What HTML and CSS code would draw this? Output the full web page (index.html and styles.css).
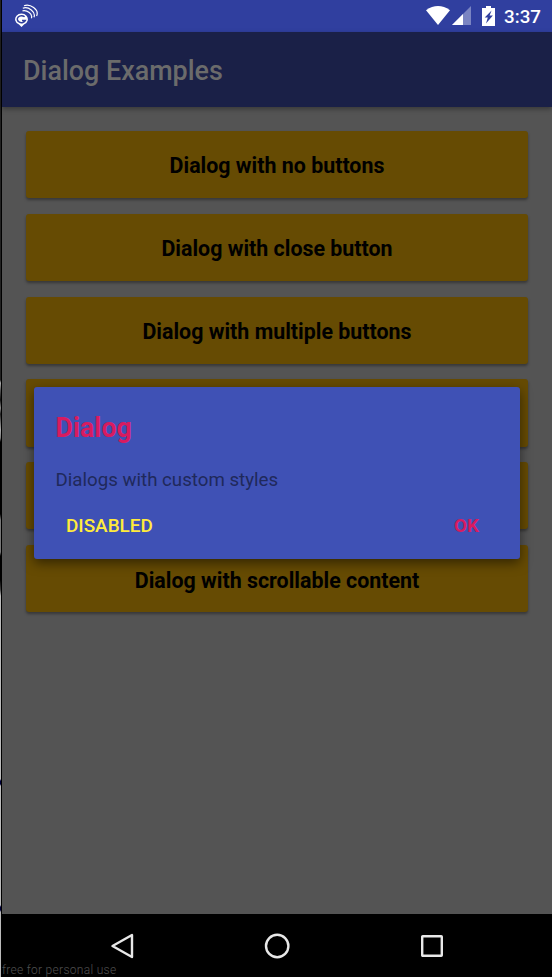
FILE: index.html
```html
<!DOCTYPE html>
<html lang="en">
<head>
<meta charset="utf-8">
<title>Dialog Examples</title>
<link rel="stylesheet" href="styles.css">
</head>
<body>
<div class="device">
  <header class="status">
    <svg class="notice" width="26" height="24" viewBox="0 0 26 24" fill="none" stroke="#fff">
      <path d="M8.5 23 6 20.6A6.4 5.8 0 1 1 11 20.6Z" fill="#fff" stroke="none"/>
      <path d="M11.6 12.8A4.2 3.5 0 1 0 12.4 16.4H9" stroke="#303f9f" stroke-width="1.5"/>
      <path d="M9.5 6.8C14 5.7 20 10 18.4 14.2M9.8 4.2C15.5 2.2 23 8 21 13.2M11 1.8C17-.6 26.5 5.5 23.6 12" stroke-width="1.2"/>
    </svg>
    <div class="indicators">
      <svg class="wifi" width="24" height="19" viewBox="0 0 24 19"><path d="M0 4.2Q12-4 24 4.2L12 19Z" fill="#fff"/></svg>
      <svg class="signal" width="19" height="19" viewBox="0 0 19 19"><path d="M0 19 19 0V19Z" fill="#7a84c2"/><path d="M0 19 11 8V19Z" fill="#fff"/></svg>
      <svg class="battery" width="13" height="20" viewBox="0 0 13 20"><path d="M4 0h5v2h4v18H0V2h4Z" fill="#fff"/><path d="M9.6 4.5 2.7 11.4H5.8L4 17.5 10.9 9.6H7.6Z" fill="#303f9f"/></svg>
      <span class="clock">3:37</span>
    </div>
  </header>
  <div class="appbar"><h1>Dialog Examples</h1></div>
  <main class="list">
    <button class="item">Dialog with no buttons</button>
    <button class="item">Dialog with close button</button>
    <button class="item">Dialog with multiple buttons</button>
    <button class="item"></button>
    <button class="item"></button>
    <button class="item">Dialog with scrollable content</button>
  </main>
  <nav class="navbar">
    <svg width="24" height="26" viewBox="0 0 24 26"><path d="M2.5 13 22 2V24Z"/></svg>
    <svg width="26" height="26" viewBox="0 0 26 26"><circle cx="13.2" cy="13" r="11.2"/></svg>
    <svg width="24" height="24" viewBox="0 0 24 24"><rect x="2.2" y="2.2" width="19.6" height="19.6" rx=".5"/></svg>
    <span class="watermark">free for personal use</span>
  </nav>
  <section class="dialog" role="dialog">
    <h2>Dialog</h2>
    <p>Dialogs with custom styles</p>
    <div class="actions"><span class="disabled">DISABLED</span><span class="ok">OK</span></div>
  </section>
</div>
</body>
</html>
```
FILE: styles.css
```css
* { box-sizing: border-box; }
body {
  margin: 0;
  height: 977px;
  padding-left: 2px;
  overflow: hidden;
  font-family: Roboto, sans-serif;
  background:
    linear-gradient(#000, #000) 1px 0 / 1px 977px no-repeat,
    linear-gradient(#222 0 380px, #aaa 383px, #555 390px, #111 400px, #888 408px, #222 414px, #aaa 430px, #777 438px, #000 442px 514px, #777 520px 552px, #000 556px 580px, #444 590px, #bbb 596px 779px, #00003a 781px 784px, #bbb 786px 905px, #00003a 907px 910px, #bbb 912px 977px) 0 0 / 1px 977px no-repeat #000;
}
.device {
  position: relative;
  height: 977px;
  display: flex;
  flex-direction: column;
  background: #545454;
}
.status {
  height: 32px;
  display: flex;
  justify-content: space-between;
  background: #303f9f;
}
.notice { margin: 4px 0 0 11px; }
.indicators { display: flex; padding: 6px 11px 0 0; }
.signal { margin-left: 2px; }
.battery { margin-left: 11px; }
.clock { margin-left: 9px; font-size: 18.8px; line-height: 22px; font-weight: 500; color: #fff; }
.appbar {
  height: 75px;
  padding: 3px 0 0 21px;
  display: flex;
  align-items: center;
  background: #1a2047;
  box-shadow: 0 2px 5px rgba(0,0,0,.35);
}
h1 { margin: 0; font-size: 26.9px; font-weight: 500; color: #6b6b6b; }
.list {
  flex: 1;
  display: flex;
  flex-direction: column;
  gap: 15.8px;
  padding: 23.8px 24px 0;
}
.item {
  height: 67.1px;
  padding: 3.6px 0 0;
  border: 0;
  border-radius: 3px;
  background: #664b03;
  box-shadow: 0 2px 3px rgba(0,0,0,.35);
  font: 700 21.4px/26px Roboto, sans-serif;
  color: #000;
}
.navbar {
  position: relative;
  height: 63px;
  display: flex;
  justify-content: space-between;
  align-items: center;
  padding: 1px 108px 0 108px;
  background: #000;
}
.navbar svg { fill: none; stroke: #e8e8e8; stroke-width: 2.4; stroke-linejoin: round; }
.watermark { position: absolute; left: 0; bottom: -1px; font-size: 12px; line-height: 15px; font-weight: 300; letter-spacing: .3px; color: #505050; }
.dialog {
  position: absolute;
  left: 32px;
  top: 387.4px;
  width: 486px;
  height: 171.6px;
  padding: 25px 22px 0;
  border-radius: 3px;
  background: #3f51b5;
  box-shadow: 0 4px 12px rgba(0,0,0,.5);
}
h2 { margin: 0 0 0 -0.5px; font-size: 26.8px; line-height: 32px; font-weight: 700; color: #d81b60; }
p { margin: 24px 0 0 -0.5px; font-size: 18.7px; line-height: 24px; color: #20295b; }
.actions {
  display: flex;
  justify-content: space-between;
  margin-top: 22px;
  padding: 0 19px 0 10px;
  font-size: 18.9px;
  line-height: 24px;
}
.disabled { font-weight: 500; color: #ffeb3b; }
.ok { font-weight: 700; color: #d81b60; }
```
